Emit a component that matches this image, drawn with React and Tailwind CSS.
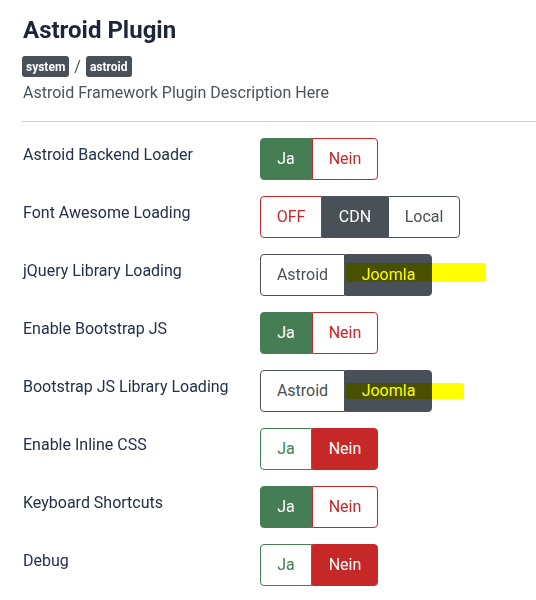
import React from "react";

const GREEN = "#457d54";
const RED = "#c52827";
const DARK = "#495057";

function Seg({ label, active, color, first, last, w }) {
  const base =
    "flex items-center justify-center h-[42px] text-[16px] border " +
    (first ? "rounded-l-[4px] " : "") +
    (last ? "rounded-r-[4px] " : "");
  const style = active
    ? { backgroundColor: color, borderColor: color, color: "#fff", width: w }
    : { backgroundColor: "#fff", borderColor: color, color: color, width: w };
  return (
    <div className={base} style={style}>
      {label}
    </div>
  );
}

function Highlight({ className }) {
  return (
    <div
      className={
        "absolute bg-[#ffff00] mix-blend-multiply rounded-[2px] pointer-events-none " +
        className
      }
    />
  );
}

function Row({ label, children }) {
  return (
    <div className="flex items-start">
      <div className="w-[238px] pl-px pt-[5px] text-[16px] leading-6 text-[#22304a]">
        {label}
      </div>
      <div className="relative flex">{children}</div>
    </div>
  );
}

function JaNein({ ja }) {
  return (
    <>
      <Seg label="Ja" active={ja} color={GREEN} first w="52px" />
      <Seg label="Nein" active={!ja} color={RED} last w="66px" />
    </>
  );
}

export default function App() {
  return (
    <div
      className="w-[536px] h-[600px] bg-white overflow-hidden pl-[22px] pt-[15px]"
      style={{ fontFamily: "Roboto, 'Liberation Sans', sans-serif" }}
    >
      <h1 className="text-[24px] font-bold leading-[30px] text-[#1c2638] pl-px">
        Astroid Plugin
      </h1>
      <div className="flex items-center gap-[5px] mt-[11px] h-[21px]">
        <span className="bg-[#495057] text-white text-[12px] font-bold rounded-[3px] px-[4px] h-[21px] flex items-center">
          system
        </span>
        <span className="text-[#495057] text-[16px]">/</span>
        <span className="bg-[#495057] text-white text-[12px] font-bold rounded-[3px] px-[4px] h-[21px] flex items-center">
          astroid
        </span>
      </div>
      <p className="text-[16px] leading-6 text-[#4a525b] mt-[4px] pl-px">
        Astroid Framework Plugin Description Here
      </p>
      <div className="h-px bg-[#cfcfcf] mt-[16px]" />
      <div className="flex flex-col gap-[16px] mt-[16px]">
        <Row label="Astroid Backend Loader">
          <JaNein ja />
        </Row>
        <Row label="Font Awesome Loading">
          <Seg label="OFF" color={RED} first w="62px" />
          <Seg label="CDN" active color={DARK} w="66px" />
          <Seg label="Local" color={DARK} last w="72px" />
        </Row>
        <Row label="jQuery Library Loading">
          <Seg label="Astroid" color={DARK} first w="85px" />
          <Seg label="Joomla" active color={DARK} last w="87px" />
          <Highlight className="left-[86px] top-[9px] w-[140px] h-[19px]" />
        </Row>
        <Row label="Enable Bootstrap JS">
          <JaNein ja />
        </Row>
        <Row label="Bootstrap JS Library Loading">
          <Seg label="Astroid" color={DARK} first w="85px" />
          <Seg label="Joomla" active color={DARK} last w="87px" />
          <Highlight className="left-[86px] top-[13px] w-[118px] h-[16px]" />
        </Row>
        <Row label="Enable Inline CSS">
          <JaNein ja={false} />
        </Row>
        <Row label="Keyboard Shortcuts">
          <JaNein ja />
        </Row>
        <Row label="Debug">
          <JaNein ja={false} />
        </Row>
      </div>
    </div>
  );
}
